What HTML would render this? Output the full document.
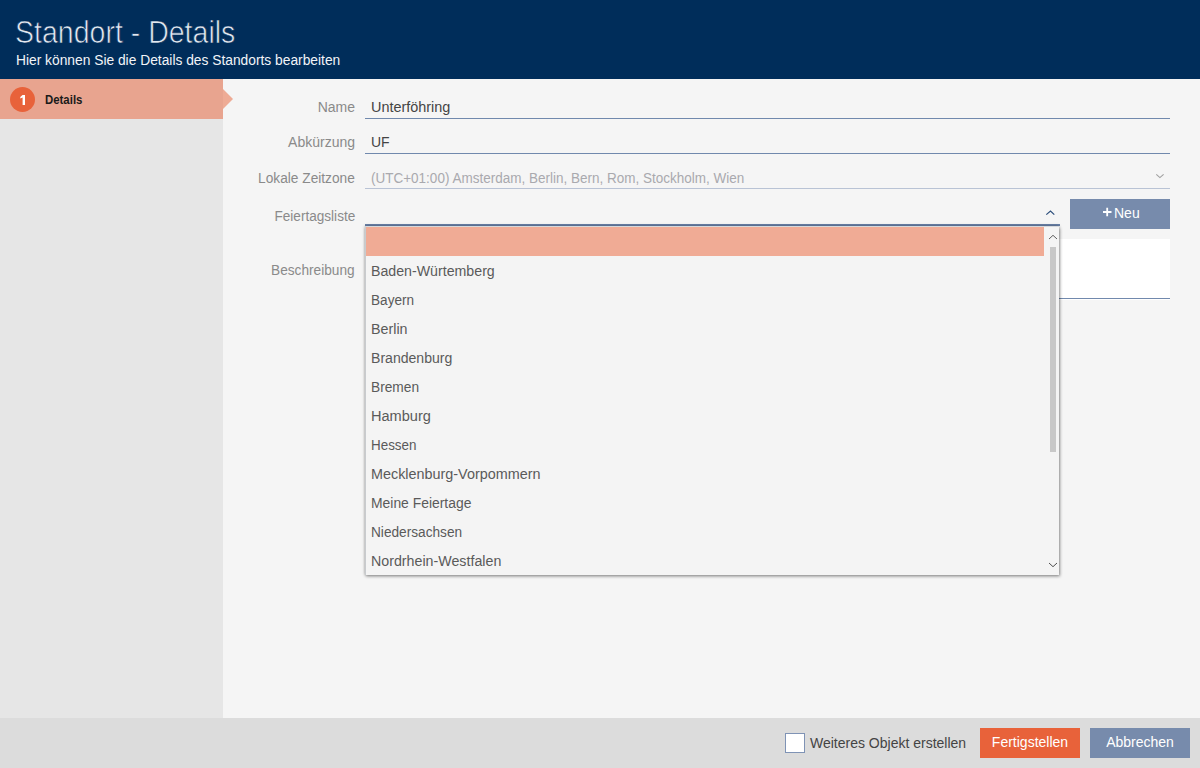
<!DOCTYPE html>
<html><head><meta charset="utf-8">
<style>
*{box-sizing:border-box;margin:0;padding:0}
html,body{width:1200px;height:768px;overflow:hidden;background:#f5f5f5;font-family:"Liberation Sans",sans-serif;position:relative}
.abs{position:absolute}
#hdr{left:0;top:0;width:1200px;height:79px;background:#002d5a}
#title{left:15px;top:15px;font-size:31px;color:#e2e8f0;-webkit-text-stroke:0.7px #002d5a;white-space:nowrap;line-height:36px;transform:scaleX(0.92);transform-origin:0 0}
#sub{left:16px;top:52px;font-size:14px;color:#f2f4f8;white-space:nowrap;line-height:17px;transform:scaleX(0.985);transform-origin:0 0}
#side{left:0;top:79px;width:223px;height:639px;background:#e6e6e6}
#step{left:0;top:79px;width:223px;height:40px;background:#e8a48f}
#steparrow{left:223px;top:89px;width:0;height:0;border-top:10px solid transparent;border-bottom:10px solid transparent;border-left:10px solid #eeab95}
#circ{left:10px;top:87px;width:25px;height:25px;border-radius:50%;background:#e8623a;color:#fff;font-weight:bold;font-size:13px;text-align:center;line-height:25px}
#steptxt{left:45px;top:93px;font-size:12px;font-weight:bold;color:#1a1a1a;line-height:15px;transform:scaleX(0.95);transform-origin:0 0}
.lbl{right:845px;transform-origin:100% 0;font-size:14px;color:#8a8a8a;white-space:nowrap;line-height:17px;text-align:right}
.val{left:371px;font-size:14px;color:#444;white-space:nowrap;line-height:17px}
.uline{left:365px;width:805px;height:1px;background:#7189ad}
.item{left:371px;font-size:14px;color:#5a5a5a;line-height:29px;white-space:nowrap;transform-origin:0 0}
#ftr{left:0;top:718px;width:1200px;height:50px;background:#dcdcdc}
.btn{top:728px;width:100px;height:30px;color:#fff;font-size:14px;text-align:center;line-height:29px}
</style></head><body>
<div id="hdr" class="abs"></div>
<div id="title" class="abs">Standort - Details</div>
<div id="sub" class="abs">Hier können Sie die Details des Standorts bearbeiten</div>
<div id="side" class="abs"></div>
<div id="step" class="abs"></div>
<div id="steparrow" class="abs"></div>
<div id="circ" class="abs"></div>
<svg class="abs" style="left:15px;top:90px" width="16" height="18" viewBox="0 0 16 18"><path d="M7.5 5 L10 5 L10 15 L7.6 15 L7.6 7.6 L5.3 8.4 L5.3 6.9 Z" fill="#fff"/></svg>
<div id="steptxt" class="abs">Details</div>

<div class="abs lbl" style="top:99px">Name</div>
<div class="abs val" style="top:99px;transform:scaleX(1.03);transform-origin:0 0">Unterföhring</div>
<div class="abs uline" style="top:118px"></div>

<div class="abs lbl" style="top:134px">Abkürzung</div>
<div class="abs val" style="top:134px">UF</div>
<div class="abs uline" style="top:153px"></div>

<div class="abs lbl" style="top:170px;transform:scaleX(0.979)">Lokale Zeitzone</div>
<div class="abs val" style="top:170px;color:#a9a9ae;transform:scaleX(0.964);transform-origin:0 0">(UTC+01:00) Amsterdam, Berlin, Bern, Rom, Stockholm, Wien</div>
<div class="abs uline" style="top:188px;background:#b9c3d5"></div>
<svg class="abs" style="left:1153px;top:171px" width="14" height="10" viewBox="0 0 14 10"><path d="M3.3 3.3 L6.9 6.6 L10.6 3.3" fill="none" stroke="#a0a0a0" stroke-width="1.1"/></svg>

<div class="abs lbl" style="top:208px;transform:scaleX(0.97)">Feiertagsliste</div>
<div class="abs uline" style="top:224px;width:695px;height:2px;background:#6a82a8"></div>
<svg class="abs" style="left:1043px;top:208px" width="14" height="10" viewBox="0 0 14 10"><path d="M3.3 6.6 L7.5 3 L11.3 6.6" fill="none" stroke="#2d4f7c" stroke-width="1.2"/></svg>

<div class="abs" style="left:1070px;top:199px;width:100px;height:30px;background:#778bac"></div>
<svg class="abs" style="left:1102px;top:207px" width="10" height="10" viewBox="0 0 10 10"><path d="M1 5 H9.5 M5.2 0.8 V9.2" fill="none" stroke="#fff" stroke-width="1.8"/></svg>
<div class="abs" style="left:1114px;top:205px;font-size:14px;color:#fff;line-height:17px">Neu</div>

<div class="abs lbl" style="top:262px;transform:scaleX(0.976)">Beschreibung</div>
<div class="abs" style="left:365px;top:239px;width:805px;height:61px;background:#fff"></div>
<div class="abs uline" style="top:298px"></div>

<!-- popup -->
<div class="abs" style="left:365px;top:226px;width:694px;height:349px;background:#f4f4f4;border-left:1px solid #c8cbce;border-top:1px solid #d6d9dc;box-shadow:0 0 3px rgba(0,0,0,0.35),1px 1.5px 3px rgba(0,0,0,0.3)"></div>
<div class="abs" style="left:366px;top:227px;width:678px;height:29px;background:#f0ab95"></div>
<div class="abs item" style="top:257px;transform:scaleX(1.013)">Baden-Würtemberg</div>
<div class="abs item" style="top:286px;transform:scaleX(0.971)">Bayern</div>
<div class="abs item" style="top:315px;transform:scaleX(1.02)">Berlin</div>
<div class="abs item" style="top:344px;transform:scaleX(1.005)">Brandenburg</div>
<div class="abs item" style="top:373px;transform:scaleX(0.98)">Bremen</div>
<div class="abs item" style="top:402px;transform:scaleX(1.04)">Hamburg</div>
<div class="abs item" style="top:431px;transform:scaleX(0.958)">Hessen</div>
<div class="abs item" style="top:460px;transform:scaleX(1.027)">Mecklenburg-Vorpommern</div>
<div class="abs item" style="top:489px;transform:scaleX(0.992)">Meine Feiertage</div>
<div class="abs item" style="top:518px;transform:scaleX(0.976)">Niedersachsen</div>
<div class="abs item" style="top:547px;transform:scaleX(1.017)">Nordrhein-Westfalen</div>
<div class="abs" style="left:1050px;top:247px;width:6px;height:205px;background:#c8c8c8"></div>
<svg class="abs" style="left:1046px;top:232px" width="14" height="10" viewBox="0 0 14 10"><path d="M3 7 L7 3.3 L11 7" fill="none" stroke="#606060" stroke-width="1"/></svg>
<svg class="abs" style="left:1046px;top:560px" width="14" height="10" viewBox="0 0 14 10"><path d="M3 3 L7 6.7 L11 3" fill="none" stroke="#505050" stroke-width="1"/></svg>

<div id="ftr" class="abs"></div>
<div class="abs" style="left:785px;top:733px;width:20px;height:20px;background:#fff;border:1px solid #7f93b5"></div>
<div class="abs" style="left:810px;top:735px;font-size:14px;color:#444;line-height:17px">Weiteres Objekt erstellen</div>
<div class="abs btn" style="left:980px;background:#e8623a">Fertigstellen</div>
<div class="abs btn" style="left:1090px;background:#778bac">Abbrechen</div>
</body></html>
